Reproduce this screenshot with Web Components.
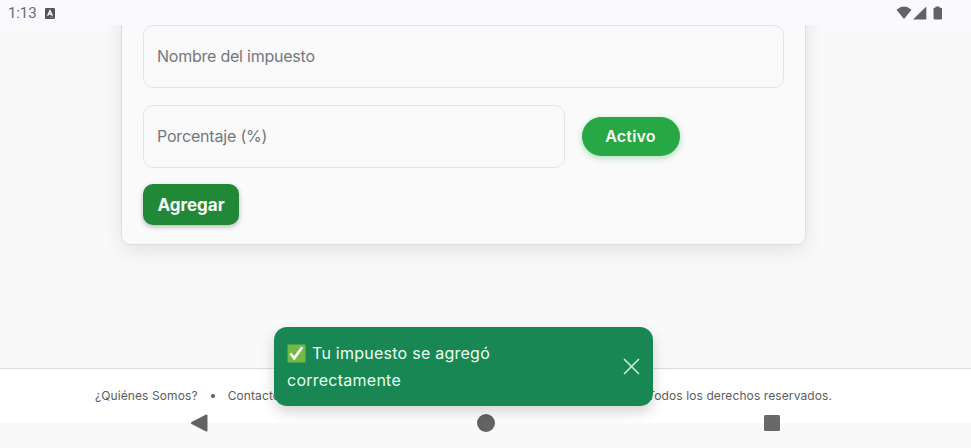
<!DOCTYPE html>
<html lang="es"><head><meta charset="utf-8"><title>Impuestos</title>
<style>html,body{margin:0;height:100%;overflow:hidden}body{background:#f8f8f9}</style></head><body>
<tax-screen></tax-screen>
<script>
const define = (name, markup) => customElements.define(name, class extends HTMLElement {
  constructor() {
    super();
    const t = document.createElement('template');
    t.innerHTML = markup;
    this.attachShadow({mode: 'open'}).append(t.content.cloneNode(true));
  }
});

define('status-bar', `<style>
:host{display:flex;box-sizing:border-box;height:25px;flex:none;align-items:center;justify-content:space-between;padding:1px 28px 0 8px;background:#f9f9fe;color:#6c6c6e;font:15px/24px Roboto,sans-serif;position:relative;z-index:1}
.side{display:flex;align-items:center;gap:8px}span{letter-spacing:-.1px}svg{display:block}
</style><div class="side"><span>1:13</span>
<svg width="10" height="11" viewBox="0 0 10 11"><rect width="10" height="11" rx="1.2" fill="#555557"/><path d="M2.6 7.8 5 2.5l2.4 5.3M3.5 6.1h3" fill="none" stroke="#fff" stroke-width="1.3"/><path d="M5.3 9.3h1m1 0h1" stroke="#ddd" stroke-width=".8"/></svg></div>
<svg width="47" height="14" viewBox="0 0 47 14" fill="#626264"><path d="M.5 3.7Q8 -2.5 15.500 3.700L8 13Z"/><path d="M17 13.500 30.300.5v13Z"/><path d="M40 .5h4v1.200h1.500q1 0 1 1v9.600q0 1.200-1.200 1.200h-6.100q-1.200 0-1.200-1.200V2.700q0-1 1-1h1Z" transform="translate(-.5 0)"/></svg>`);

define('text-field', `<style>
:host{display:flex;box-sizing:border-box;height:63px;align-items:center;padding:0 13px 2px;border:1px solid #e4e4e7;border-radius:10px;background:#fafafb;color:#73787b;font-size:16px;letter-spacing:var(--track,-.18px)}
</style><slot></slot>`);

define('pill-toggle', `<style>
:host{display:flex;box-sizing:border-box;width:98px;height:39px;padding:0 1px 1px 0;align-items:center;justify-content:center;border-radius:20px;background:#28a745;box-shadow:0 2px 6px #28a74560;color:#f8fff9;font-size:16px;font-weight:600;letter-spacing:.2px}
</style><slot></slot>`);

define('action-button', `<style>
:host{display:flex;box-sizing:border-box;width:96px;height:41px;align-items:center;justify-content:center;border-radius:10px;background:#218838;box-shadow:0 2px 5px #0004;color:#f8fff9;font-size:17px;font-weight:700}
</style><slot></slot>`);

define('tax-card', `<style>
:host{display:flex;flex-direction:column;gap:17px;box-sizing:border-box;width:685px;height:245px;margin:-25px 0 0 121px;padding:24px 21px 0;border:1px solid #dedee0;border-radius:9px;background:#fafafa;box-shadow:0 6px 20px #00000017}
.row{display:flex;align-items:center;gap:17px}.row text-field{width:422px}
action-button{margin-top:-.6px}
</style><text-field style="--track:-.23px">Nombre del impuesto</text-field>
<div class="row"><text-field>Porcentaje (%)</text-field><pill-toggle>Activo</pill-toggle></div>
<action-button>Agregar</action-button>`);
define('page-footer', `<style>
:host{display:flex;box-sizing:border-box;height:55px;flex:none;justify-content:space-between;align-items:center;padding:0 139px 1px 95px;border-top:1px solid #dcdddd;background:#fff;color:#5b5d5f;font-size:12px;letter-spacing:.1px}
nav{display:flex;align-items:center;gap:13px}i{width:4px;height:4px;border-radius:50%;background:#5b5d5f}
</style><nav><span>¿Quiénes Somos?</span><i></i><span>Contacto</span></nav><span>Todos los derechos reservados.</span>`);

define('toast-message', `<style>
:host{position:absolute;left:274px;top:327px;width:379px;height:79px;display:flex;box-sizing:border-box;align-items:center;justify-content:space-between;padding:0 13px;border-radius:13px;background:#198754;box-shadow:0 6px 14px #0000002b;color:#e9fff3;font-size:16px;line-height:27px;letter-spacing:.25px;z-index:2}
p{margin:0}.line{display:flex;align-items:center;gap:6px}svg{display:block}
</style><p><span class="line"><svg width="19" height="19" viewBox="0 0 19 19"><rect x=".5" y=".5" width="18" height="18" rx="1" fill="#75b843"/><path d="M3.500 9.500 7.200 14.300 15.300 3.200" fill="none" stroke="#fff" stroke-width="2.700"/></svg><span><slot name="first"></slot></span></span><slot></slot></p>
<svg width="17" height="17" viewBox="0 0 17 17"><path d="m1.500 1.500 14 14m0-14-14 14" stroke="#baf0d3" stroke-width="1.700" stroke-linecap="round"/></svg>`);

define('system-nav', `<style>
:host{position:absolute;left:0;right:0;bottom:0;height:50px;display:flex;box-sizing:border-box;align-items:center;justify-content:space-between;padding:0 191px 0 190px;z-index:1}svg{display:block}
</style><svg width="18" height="18" viewBox="0 0 18 18"><path d="M16.500 1.500v15L2 9Z" fill="#636363" stroke="#636363" stroke-width="2" stroke-linejoin="round"/></svg>
<svg width="18" height="18"><circle cx="9" cy="9" r="9" fill="#636363"/></svg>
<svg width="16" height="16"><rect width="16" height="16" rx="1.500" fill="#686868"/></svg>`);

define('tax-screen', `<style>
:host{display:flex;flex-direction:column;width:971px;height:448px;position:relative;overflow:hidden;background:#f9f9f9;font-family:Inter,sans-serif}
main{height:343px;overflow:hidden;display:flow-root;flex:none}
</style><status-bar></status-bar><main><tax-card></tax-card></main><page-footer></page-footer>
<toast-message><span slot="first">Tu impuesto se agregó</span>correctamente</toast-message><system-nav></system-nav>`);
</script></body></html>
